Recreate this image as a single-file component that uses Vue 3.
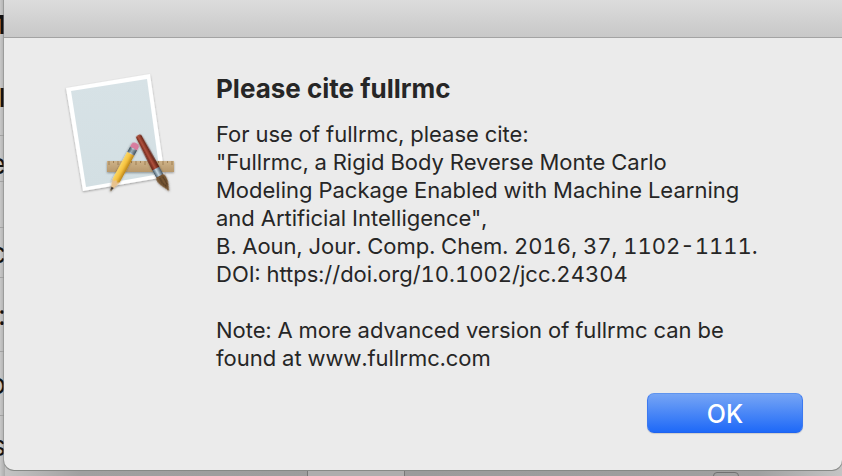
<script setup>
import { ref } from 'vue'

const open = ref(true)
const message = [
  'For use of fullrmc, please cite:',
  '"Fullrmc, a Rigid Body Reverse Monte Carlo',
  'Modeling Package Enabled with Machine Learning',
  'and Artificial Intelligence",',
  'B. Aoun, Jour. Comp. Chem. 2016, 37, 1102-1111.',
  'DOI: https://doi.org/10.1002/jcc.24304',
  '',
  'Note: A more advanced version of fullrmc can be',
  'found at www.fullrmc.com',
].join('\n')
const rows = [
  { text: '1', kind: 'strong plain' },
  { text: 'l', kind: 'strong low' },
  { text: 'e', kind: 'low' },
  { text: '', kind: '' },
  { text: 'c', kind: '' },
  { text: ':', kind: '' },
  { text: 'o', kind: '' },
  { text: 's', kind: 'plain' },
]
const ticks = Array.from({ length: 15 }, (_, i) => i)
</script>

<template>
  <main class="screen">
    <div class="backdrop" aria-hidden="true">
      <div v-for="(row, i) in rows" :key="i" class="row" :class="row.kind">
        <span>{{ row.text }}</span>
      </div>
    </div>
    <section v-if="open" class="dialog" role="dialog" aria-labelledby="title" aria-describedby="message">
      <header class="titlebar"></header>
      <div class="content">
        <svg class="icon" viewBox="0 0 120 130" aria-hidden="true">
          <defs>
            <linearGradient id="paper" x1="0" y1="0" x2="0" y2="1">
              <stop offset="0" stop-color="#d7e2e6" />
              <stop offset="1" stop-color="#d3dfe3" />
            </linearGradient>
            <linearGradient id="wood" x1="0" y1="0" x2="0" y2="1">
              <stop offset="0" stop-color="#ceb288" />
              <stop offset="1" stop-color="#b7986c" />
            </linearGradient>
            <linearGradient id="lead" x1="0" x2="1">
              <stop offset="0" stop-color="#f8d667" />
              <stop offset=".5" stop-color="#f7c33e" />
              <stop offset="1" stop-color="#b98218" />
            </linearGradient>
            <linearGradient id="handle" x1="0" x2="1">
              <stop offset="0" stop-color="#5c1b11" />
              <stop offset=".45" stop-color="#b0523d" />
              <stop offset="1" stop-color="#4f140c" />
            </linearGradient>
            <linearGradient id="metal" x1="0" x2="1">
              <stop offset="0" stop-color="#3f5260" />
              <stop offset=".45" stop-color="#c5d8e3" />
              <stop offset="1" stop-color="#42505b" />
            </linearGradient>
            <filter id="shade" x="-20%" y="-20%" width="140%" height="140%">
              <feDropShadow dx="0" dy="1" stdDeviation="1" flood-opacity=".35" />
            </filter>
          </defs>
          <g filter="url(#shade)">
            <path d="M6 18 90 4 105 107 23 121Z" fill="#fff" />
            <path d="M11 21 87 9 100 104 26 117Z" fill="url(#paper)" />
          </g>
          <g filter="url(#shade)">
            <path d="M47 91H114V102H47Z" fill="url(#wood)" />
            <path v-for="t in ticks" :key="t" :d="`M${49 + t * 4.5} 91v${t % 2 ? 2 : 4}`" stroke="#8d6d42" stroke-width=".7" />
          </g>
          <g transform="translate(75.500 75) rotate(28.500)" filter="url(#shade)">
            <path d="M-4 9H4V41L0 53-4 41Z" fill="#e8c28e" />
            <path d="M-1.500 48H1.500L0 53Z" fill="#383330" />
            <path d="M-4 9H4V40L2 42 0 40-2 42-4 40Z" fill="url(#lead)" />
            <path d="M-4 4H4V10H-4Z" fill="url(#metal)" />
            <path d="M-4 6H4M-4 8H4" stroke="#3d4952" stroke-width=".6" />
            <path d="M-4 4V1Q-4-2 0-2T4 1V4Z" fill="#d77c9e" />
          </g>
          <g transform="translate(78.500 66) rotate(-28)" filter="url(#shade)">
            <path d="M-3 1Q-3-1 0-1T3 1L4 38H-4Z" fill="url(#handle)" />
            <path d="M-4 37H4L4 46H-4Z" fill="url(#metal)" />
            <path d="M-4 45H4C7 50 4 57 1 63-1 57-7 51-4 45Z" fill="#765532" />
            <path d="M-1 47Q-2 53 1 58M2 47Q4 52 2 57" fill="none" stroke="#49321e" stroke-width=".8" />
          </g>
        </svg>
        <div class="copy">
          <h1 id="title">Please cite fullrmc</h1>
          <p id="message">{{ message }}</p>
        </div>
        <button class="ok" type="button" @click="open = false">OK</button>
      </div>
    </section>
    <footer class="below" aria-hidden="true">
      <span class="cell"></span>
      <span class="tab"></span>
    </footer>
  </main>
</template>

<style>
body { overflow: hidden; }
</style>

<style scoped>
.screen {
  position: relative;
  min-height: 100vh;
  overflow: hidden;
  background: linear-gradient(90deg, #c6c6c6, #a0a0a0 80px, #9b9b9b 50%, #a0a0a0 90%, #c4c4c4);
  font-family: Inter, "Liberation Sans", sans-serif;
  color: #262626;
}
.backdrop {
  position: absolute;
  inset: 0 auto 0 0;
  width: 5px;
  display: grid;
  grid-template-columns: 100%;
  grid-template-rows: 50px 86px 46px 46px 50px 74px 64px 60px;
  background: linear-gradient(90deg, #c8c8c8, #aaa);
}
.row {
  display: flex;
  align-items: center;
  justify-content: flex-end;
  border-bottom: 1px solid #a2a2a2;
  color: #111;
  font-size: 28px;
  line-height: 28px;
}
.row span { margin-right: -1px; }
.strong { font-weight: 700; font-size: 26px; }
.low { padding-top: 10px; }
.plain { border-bottom-color: transparent; }
.dialog {
  position: relative;
  margin: 0 0 0 4px;
  overflow: hidden;
  background: #ebebeb;
  border-radius: 0 0 10px 10px;
  box-shadow: 0 0 0 1px #8689868c, 0 1px 0 #868986;
}
.titlebar {
  height: 37px;
  background: linear-gradient(#dcdcdc, #c8c8c8);
  border-bottom: 1px solid #a3a3a3;
}
.content {
  display: grid;
  grid-template-columns: 120px 1fr;
  column-gap: 36px;
  padding: 32px 39px 37px 56px;
}
.icon { width: 120px; height: 130px; }
.copy { min-width: 0; }
h1 {
  margin: 4px 0 16px;
  font-size: 26px;
  line-height: 30px;
  font-weight: 700;
}
p {
  margin: 0;
  font-size: 22px;
  line-height: 28px;
  font-variant-numeric: tabular-nums;
  white-space: pre-line;
}
.ok {
  grid-column: 2;
  justify-self: end;
  width: 156px;
  height: 40px;
  margin-top: 21px;
  padding: 2px 0 0;
  border: 1px solid;
  border-color: #5f94ee #3c79f0 #1f63ee;
  border-radius: 7px;
  background: linear-gradient(#76a5f5, #1e69f8);
  box-shadow: 0 1px 1px #0002;
  color: #fff;
  font: 500 25px/36px Inter, "Liberation Sans", sans-serif;
}
.below {
  display: flex;
  justify-content: space-between;
  height: 5px;
  margin-top: 1px;
  padding: 0 103px 0 303px;
  margin-left: 4px;
}
.cell {
  width: 96px;
  border: solid #777;
  border-width: 0 1px;
  background: #adadad;
}
.tab {
  width: 26px;
  height: 8px;
  margin-top: 1px;
  border: 1px solid #707070;
  border-radius: 6px;
  box-sizing: border-box;
}
</style>
